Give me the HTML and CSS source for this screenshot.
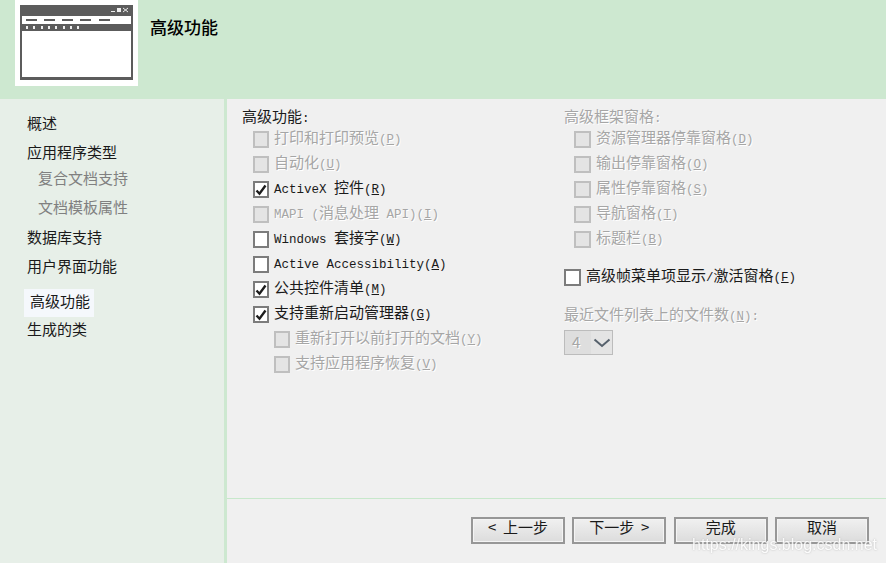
FILE: index.html
```html
<!DOCTYPE html>
<html lang="zh-CN">

<head>
    <meta charset="UTF-8">
    <title>高级功能</title>
    <link rel="stylesheet" href="styles.css">
</head>

<body>
    <div class="wizard">
        <header class="banner">
            <div class="logo">
                <svg width="113" height="75" viewBox="0 0 113 75">
                    <rect width="113" height="75" fill="#5c5c5c" />
                    <rect x="2" y="11" width="109" height="8" fill="#fff" />
                    <rect x="2" y="26" width="109" height="46" fill="#fff" />
                    <rect x="6" y="14" width="11" height="2" fill="#5c5c5c" />
                    <rect x="24" y="14" width="11" height="2" fill="#5c5c5c" />
                    <rect x="42" y="14" width="11" height="2" fill="#5c5c5c" />
                    <rect x="60" y="14" width="11" height="2" fill="#5c5c5c" />
                    <rect x="79" y="14" width="11" height="2" fill="#5c5c5c" />
                    <g fill="#eee">
                        <rect x="6" y="21" width="2" height="3" />
                        <rect x="13" y="21" width="2" height="3" />
                        <rect x="21" y="21" width="2" height="3" />
                        <rect x="28" y="21" width="2" height="3" />
                        <rect x="35" y="21" width="2" height="3" />
                        <rect x="43" y="21" width="2" height="3" />
                        <rect x="50" y="21" width="2" height="3" />
                        <rect x="57" y="21" width="2" height="3" />
                        <rect x="91" y="6" width="4" height="1" />
                        <rect x="97" y="3" width="4" height="4" />
                        <path d="M103 3l5 4M108 3l-5 4" stroke="#eee" stroke-width="1" />
                    </g>
                </svg>
            </div>
            <h1 class="banner-title">高级功能</h1>
        </header>

        <div class="content">
            <nav class="sidebar">
                <div class="nav-item first">概述</div>
                <div class="nav-item">应用程序类型</div>
                <div class="nav-item sub tight">复合文档支持</div>
                <div class="nav-item sub">文档模板属性</div>
                <div class="nav-item wide">数据库支持</div>
                <div class="nav-item">用户界面功能</div>
                <div class="nav-item active">高级功能</div>
                <div class="nav-item close">生成的类</div>
            </nav>

            <main class="page">
                <div class="options">
                    <section class="col-left">
                        <div class="group-label">高级功能<span class="latin">:</span></div>
                        <label class="row off"><i class="box"></i><span class="text">打印和打印预览<span class="latin">(<u>P</u>)</span></span></label>
                        <label class="row off"><i class="box"></i><span class="text">自动化<span class="latin">(<u>U</u>)</span></span></label>
                        <label class="row"><i class="box"><svg width="12" height="12" viewBox="0 0 12 12"><path d="M1.5 6.5l3 3.2L10.5 1.5" fill="none" stroke="#1d1d1d" stroke-width="2.4" /></svg></i><span class="text"><span class="latin">ActiveX </span>控件<span class="latin">(<u>R</u>)</span></span></label>
                        <label class="row off"><i class="box"></i><span class="text"><span class="latin">MAPI (</span>消息处理<span class="latin"> API)(<u>I</u>)</span></span></label>
                        <label class="row"><i class="box"></i><span class="text"><span class="latin">Windows </span>套接字<span class="latin">(<u>W</u>)</span></span></label>
                        <label class="row"><i class="box"></i><span class="text"><span class="latin">Active Accessibility(<u>A</u>)</span></span></label>
                        <label class="row"><i class="box"><svg width="12" height="12" viewBox="0 0 12 12"><path d="M1.5 6.5l3 3.2L10.5 1.5" fill="none" stroke="#1d1d1d" stroke-width="2.4" /></svg></i><span class="text">公共控件清单<span class="latin">(<u>M</u>)</span></span></label>
                        <label class="row"><i class="box"><svg width="12" height="12" viewBox="0 0 12 12"><path d="M1.5 6.5l3 3.2L10.5 1.5" fill="none" stroke="#1d1d1d" stroke-width="2.4" /></svg></i><span class="text">支持重新启动管理器<span class="latin">(<u>G</u>)</span></span></label>
                        <label class="row off nested"><i class="box"></i><span class="text">重新打开以前打开的文档<span class="latin">(<u>Y</u>)</span></span></label>
                        <label class="row off nested"><i class="box"></i><span class="text">支持应用程序恢复<span class="latin">(<u>V</u>)</span></span></label>
                    </section>

                    <section class="col-right">
                        <div class="group-label off">高级框架窗格<span class="latin">:</span></div>
                        <label class="row off"><i class="box"></i><span class="text">资源管理器停靠窗格<span class="latin">(<u>D</u>)</span></span></label>
                        <label class="row off"><i class="box"></i><span class="text">输出停靠窗格<span class="latin">(<u>O</u>)</span></span></label>
                        <label class="row off"><i class="box"></i><span class="text">属性停靠窗格<span class="latin">(<u>S</u>)</span></span></label>
                        <label class="row off"><i class="box"></i><span class="text">导航窗格<span class="latin">(<u>T</u>)</span></span></label>
                        <label class="row off"><i class="box"></i><span class="text">标题栏<span class="latin">(<u>B</u>)</span></span></label>
                        <label class="row flat"><i class="box"></i><span class="text">高级帧菜单项显示<span class="latin">/</span>激活窗格<span class="latin">(<u>F</u>)</span></span></label>
                        <div class="group-label off recent">最近文件列表上的文件数<span class="latin">(<u>N</u>):</span></div>
                        <div class="combo">
                            <span class="combo-value">4</span>
                            <span class="combo-arrow"><svg width="18" height="10" viewBox="0 0 18 10"><path d="M1.5 1.5L9 8l7.5-6.5" fill="none" stroke="#56616c" stroke-width="2" /></svg></span>
                        </div>
                    </section>
                </div>

                <footer class="actions">
                    <button class="btn">&lt;&nbsp; 上一步</button>
                    <button class="btn">下一步 &nbsp;&gt;</button>
                    <button class="btn">完成</button>
                    <button class="btn">取消</button>
                </footer>
            </main>
        </div>
    </div>

    <div class="watermark">https://kings.blog.csdn.net</div>
</body>

</html>
```

FILE: styles.css
```css
* {
    box-sizing: border-box;
}

html,
body {
    margin: 0;
    height: 100%;
    overflow: hidden;
}

body {
    font-family: "Noto Sans CJK SC", sans-serif;
    font-size: 15px;
    color: #1a1a1a;
    background: #f0f0f0;
    position: relative;
}

.wizard {
    display: flex;
    flex-direction: column;
    height: 563px;
}

/* top banner */
.banner {
    height: 99px;
    flex: none;
    display: flex;
    align-items: flex-start;
    background: #cde8d0;
}

.logo {
    width: 123px;
    height: 86px;
    margin-left: 15px;
    padding: 5px;
    background: #fff;
}

.logo svg {
    display: block;
}

.banner-title {
    margin: 17px 0 0 12px;
    font-size: 17px;
    font-weight: 500;
    line-height: 20px;
    color: #000;
}

.content {
    flex: 1;
    display: flex;
    min-height: 0;
}

/* left steps */
.sidebar {
    width: 227px;
    flex: none;
    padding: 14px 0 0 27px;
    background: #e7efe8;
    border-right: 3px solid #cde8d0;
}

.nav-item {
    height: 20px;
    line-height: 20px;
    margin-top: 9px;
}

.nav-item.first {
    margin-top: 0;
}

.nav-item.sub {
    margin-left: 11px;
    color: #808080;
}

.nav-item.tight {
    margin-top: 6px;
}

.nav-item.wide {
    margin-top: 10px;
}

.nav-item.active {
    width: 70px;
    height: 28px;
    line-height: 23px;
    margin: 13px 0 0 -3px;
    padding-left: 6px;
    background: #f5f8fc;
}

.nav-item.close {
    margin-top: 2px;
}

/* main page */
.page {
    flex: 1;
    display: flex;
    flex-direction: column;
    min-width: 0;
}

.options {
    flex: none;
    height: 400px;
    display: flex;
    padding: 8px 0 0 15px;
    border-bottom: 1px solid #c7e8cb;
}

.col-left {
    width: 322px;
    flex: none;
}

.col-right {
    flex: 1;
}

.group-label {
    height: 20px;
    line-height: 18px;
}

.off {
    color: #a6a6a6;
    text-shadow: 1px 1px 0 #fff;
}

.row {
    display: flex;
    align-items: center;
    height: 25px;
    padding-left: 11px;
    white-space: pre;
}

.col-right .row {
    padding-left: 10px;
}

.row.nested {
    padding-left: 32px;
}

.col-right .row.flat {
    margin-top: 13px;
    padding-left: 0;
}

.box {
    width: 16px;
    height: 17px;
    flex: none;
    margin-right: 5px;
    display: flex;
    align-items: center;
    justify-content: center;
    background: #fff;
    border: 2px solid #7c7c7c;
}

.col-right .box {
    width: 17px;
}

.off .box {
    background: #e4e4e4;
    border-color: #bfbfbf;
}

.text {
    line-height: 20px;
    margin-bottom: 2px;
}

.latin {
    font-family: "Liberation Mono", monospace;
    font-size: 12.5px;
}

.recent {
    margin-top: 15px;
}

.combo {
    display: flex;
    width: 49px;
    height: 25px;
    margin-top: 5px;
    background: #e4e4e4;
    border: 1px solid #bcbcbc;
}

.combo-value {
    width: 26px;
    padding-left: 7px;
    line-height: 22px;
    color: #a6a6a6;
    background: #dedede;
    text-shadow: 1px 1px 0 #fff;
}

.combo-arrow {
    flex: 1;
    display: flex;
    align-items: center;
    justify-content: center;
}

/* bottom buttons */
.actions {
    display: flex;
    gap: 7.33px;
    padding: 18px 0 0 244px;
}

.btn {
    width: 94px;
    height: 27px;
    flex: none;
    padding: 0 0 8px;
    font-family: inherit;
    font-size: 15px;
    line-height: 15px;
    color: #1a1a1a;
    background: linear-gradient(#f0f0f0, #dcdcdc);
    border: 2px solid #979797;
    box-shadow: inset 0 0 0 1px #f4f4f4;
}

.watermark {
    position: absolute;
    left: 692px;
    top: 535px;
    font-family: "Liberation Sans", sans-serif;
    font-size: 16px;
    line-height: 20px;
    color: #fff;
    opacity: 0.85;
    text-shadow: 0 0 2px #a8a8a8;
}
```
